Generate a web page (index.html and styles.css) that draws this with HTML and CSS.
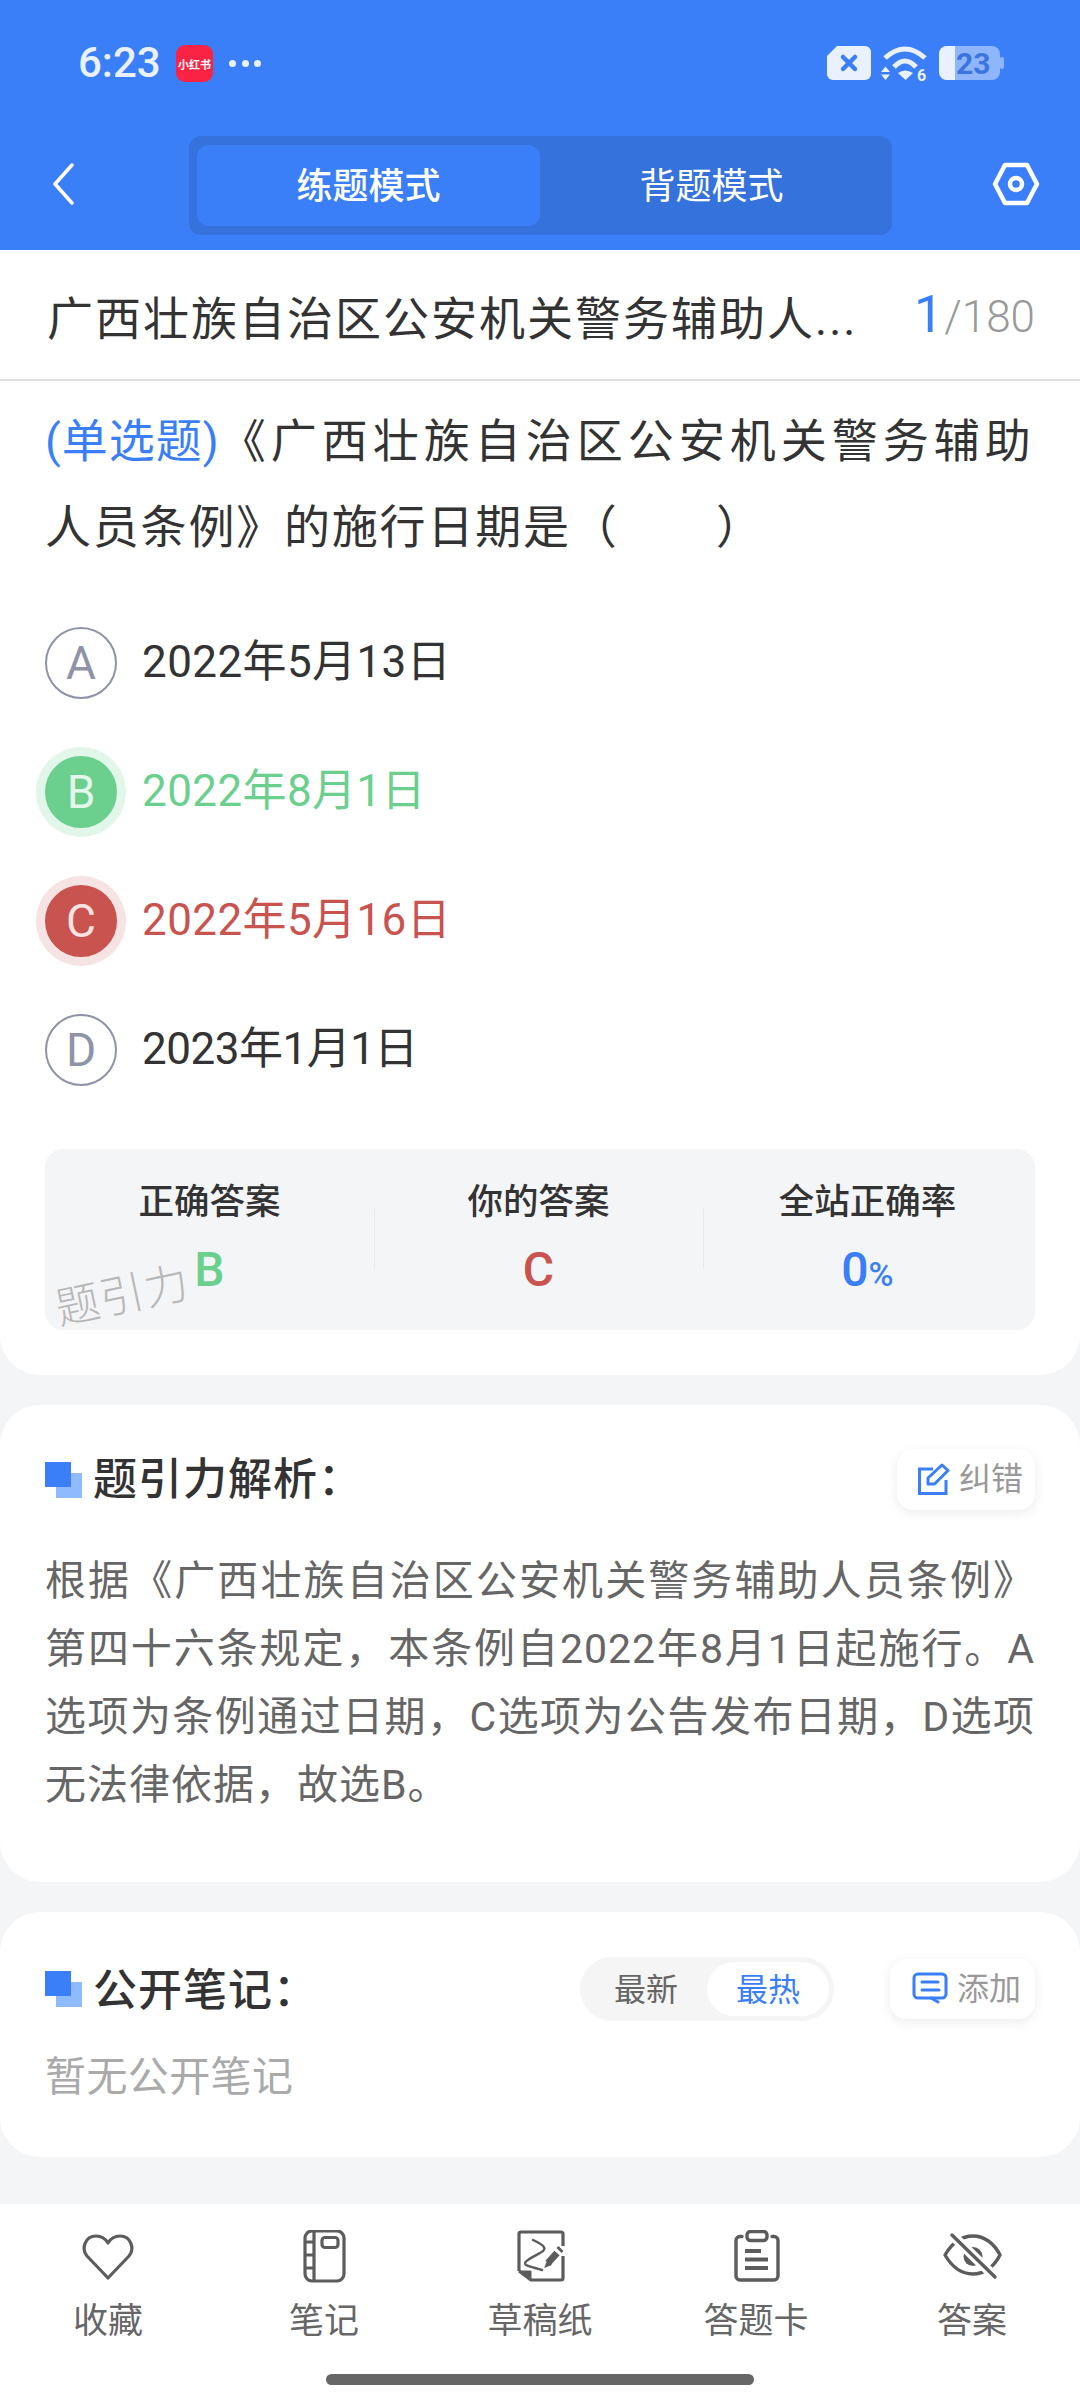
FILE: index.html
```html
<!DOCTYPE html>
<html lang="zh-CN">
<head>
  <meta charset="UTF-8" />
  <meta name="viewport" content="width=device-width, initial-scale=1.0" />
  <title>题引力</title>
  <link rel="stylesheet" href="styles.css">
</head>
<body>
  <div class="header">
    <div class="status">
      <span class="time">6:23</span>
      <span class="app-badge">小红书</span>
      <span class="dots"><i></i><i></i><i></i></span>
      <span class="status-right">
        <svg width="44" height="34" viewBox="0 0 44 34"><path d="M10 0H38a6 6 0 0 1 6 6V28a6 6 0 0 1-6 6H6a6 6 0 0 1-6-6V10z" fill="#e9f0fe"/><path d="M16 11l12 12M28 11L16 23" stroke="#3b7ff8" stroke-width="4.5" stroke-linecap="round"/></svg>
        <svg class="wifi" width="48" height="36" viewBox="0 0 48 36" fill="#e9f0fe"><path d="M4 12Q24 -6 44 12M13 21Q24 9 35 21" fill="none" stroke="#e9f0fe" stroke-width="5"/><path d="M17 27Q24 22 32 27L24.500 34z"/><path d="M4.500 20.500l4.500 5.500H0zM4.500 34l4.500-5.500H0z"/><text x="36" y="35" class="wifi-six">6</text></svg>
        <svg class="battery" width="65" height="34" viewBox="0 0 65 34"><rect width="61" height="34" rx="8" fill="#8fb5fb"/><rect x="61" y="11" width="4" height="12" rx="2" fill="#8fb5fb"/><path d="M8 0H16V34H8a8 8 0 0 1-8-8V8a8 8 0 0 1 8-8z" fill="#e9f0fe"/><text x="17" y="28" class="battery-num">23</text></svg>
      </span>
    </div>
    <div class="topbar">
      <svg class="back" width="22" height="42" viewBox="0 0 22 42" fill="none"><path d="M20 2L3 21l17 19" stroke="#fff" stroke-width="3.5" stroke-linecap="round" stroke-linejoin="round"/></svg>
      <div class="mode-tabs">
        <div class="mode-tab active">练题模式</div>
        <div class="mode-tab">背题模式</div>
      </div>
      <svg class="settings" width="48" height="44" viewBox="0 0 48 44" fill="none" stroke="#fff" stroke-width="4.5"><path d="M13 3H35L45 22 35 41H13L3 22z" stroke-linejoin="round"/><circle cx="24" cy="22" r="6"/></svg>
    </div>
  </div>

  <div class="main">
    <div class="card first">
      <div class="title-row">
        <div class="title">广西壮族自治区公安机关警务辅助人...</div>
        <div class="count"><b>1</b>/180</div>
      </div>
      <div class="question"><span class="q-type">(单选题)</span><span class="q-rest">《广西壮族自治区公安机关警务辅助</span><br>人员条例》的施行日期是（&emsp;&emsp;）</div>
      <div class="options">
        <div class="option"><span class="letter">A</span><span class="opt-text">2022年5月13日</span></div>
        <div class="option right"><span class="letter">B</span><span class="opt-text">2022年8月1日</span></div>
        <div class="option wrong"><span class="letter">C</span><span class="opt-text">2022年5月16日</span></div>
        <div class="option"><span class="letter">D</span><span class="opt-text tight">2023年1月1日</span></div>
      </div>
      <div class="stats">
        <div class="stat"><div class="stat-label">正确答案</div><div class="stat-value green">B</div></div>
        <div class="stat"><div class="stat-label">你的答案</div><div class="stat-value red">C</div></div>
        <div class="stat"><div class="stat-label">全站正确率</div><div class="stat-value blue">0<small>%</small></div></div>
        <div class="watermark">题引力</div>
      </div>
    </div>

    <div class="card analysis">
      <div class="card-head">
        <span class="squares"></span>
        <h3>题引力解析：</h3>
        <span class="chip">
          <svg width="32" height="32" viewBox="0 0 32 32" fill="none" stroke="#3b7ff8" stroke-width="3"><path d="M15 6H1.500V30.500H28V17"/><path d="M10 21V15L24 2l6 5.500L16.500 21z" stroke-linejoin="round"/></svg>
          纠错
        </span>
      </div>
      <p class="analysis-text">根据《广西壮族自治区公安机关警务辅助人员条例》第四十六条规定，本条例自2022年8月1日起施行。A选项为条例通过日期，C选项为公告发布日期，D选项无法律依据，故选B。</p>
    </div>

    <div class="card notes">
      <div class="card-head">
        <span class="squares"></span>
        <h3>公开笔记：</h3>
        <div class="seg">
          <span class="seg-item">最新</span>
          <span class="seg-item active">最热</span>
        </div>
        <span class="chip add">
          <svg width="36" height="32" viewBox="0 0 36 32" fill="none" stroke="#3b7ff8" stroke-width="3"><path d="M6 2H30a4 4 0 0 1 4 4V22a4 4 0 0 1-4 4H26L24 26H6a4 4 0 0 1-4-4V6a4 4 0 0 1 4-4z"/><path d="M19 26l7 4" stroke-linecap="round"/><path d="M10 10H26M10 18H27" stroke-linecap="round"/></svg>
          添加
        </span>
      </div>
      <div class="empty">暂无公开笔记</div>
    </div>
  </div>

  <div class="tabbar">
    <div class="tabs">
      <div class="tab">
        <svg width="54" height="54" viewBox="0 0 54 54" fill="none" stroke="#5c5c5c" stroke-width="3.200"><path d="M27 48L6 26C0 19 4 6 15 6c5 0 9 2 12 7 3-5 7-7 12-7 11 0 15 13 9 20z" stroke-linejoin="round"/></svg>
        <span>收藏</span>
      </div>
      <div class="tab">
        <svg width="54" height="54" viewBox="0 0 54 54" fill="none" stroke="#5c5c5c" stroke-width="3.200"><rect x="8" y="1" width="39" height="50" rx="7"/><path d="M17 1V51M8 12H17M8 25H17M8 38H17"/><rect x="25" y="7.500" width="16" height="10" rx="3"/></svg>
        <span>笔记</span>
      </div>
      <div class="tab">
        <svg width="54" height="54" viewBox="0 0 54 54" fill="none" stroke="#5c5c5c" stroke-width="3.200"><path d="M6 41V4a2 2 0 0 1 2-2H48a2 2 0 0 1 2 2V16M50 26V48a2 2 0 0 1-2 2H18L6 41" stroke-linejoin="round"/><path d="M7 41H18V49.500z" fill="#5c5c5c" stroke-width="1"/><path d="M20 10C28 14 37 18 27 23 18 28 9 32 13 35 17 37 23 38 29 40" stroke-width="2.400" stroke-linecap="round"/><path d="M35 33L44 23" stroke-width="7"/><path d="M31 38l3-7 5 4z" fill="#5c5c5c" stroke="none"/><path d="M46 20.500l2-2" stroke-width="7"/></svg>
        <span>草稿纸</span>
      </div>
      <div class="tab">
        <svg width="54" height="54" viewBox="0 0 54 54" fill="none" stroke="#5c5c5c" stroke-width="3.400"><path d="M13 6.500H11a4 4 0 0 0-4 4V46a4 4 0 0 0 4 4H45a4 4 0 0 0 4-4V10.500a4 4 0 0 0-4-4H43" stroke-linecap="round"/><rect x="18" y="1.500" width="20" height="9" rx="3.500"/><path d="M16 21H32M16 29.500H39M16 38H39" stroke-width="3.800"/></svg>
        <span>答题卡</span>
      </div>
      <div class="tab">
        <svg width="60" height="54" viewBox="0 0 60 54" fill="none" stroke="#5c5c5c" stroke-width="3.400"><path d="M3 25C10 13 20 6 31 6 42 6 52 13 58 25 52 37 42 44 31 44 20 44 10 37 3 25z" stroke-linejoin="round"/><circle cx="31" cy="26.500" r="9.500" fill="#5c5c5c" stroke="none"/><path d="M8 3L55 49" stroke="#fff" stroke-width="10"/><path d="M10 5L53 47" stroke-linecap="round"/></svg>
        <span>答案</span>
      </div>
    </div>
    <div class="home-bar"></div>
  </div>
</body>
</html>
```

FILE: styles.css
```css
* {
  box-sizing: border-box;
}
body {
  margin: 0;
  width: 1080px;
  height: 2400px;
  overflow: hidden;
  display: flex;
  flex-direction: column;
  font-family: Roboto, "Noto Sans CJK SC", sans-serif;
  background-color: #f4f5f7;
  color: #333;
}

/* header */
.header {
  background-color: #3b7ff8;
  height: 250px;
  flex-shrink: 0;
}
.status {
  height: 136px;
  padding: 45px 76px 0 78px;
  display: flex;
  align-items: flex-start;
  color: #e9f0fe;
}
.time {
  font-size: 42px;
  line-height: 36px;
  font-weight: 500;
  width: 98px;
}
.app-badge {
  width: 37px;
  height: 37px;
  border-radius: 9px;
  background-color: #fb2343;
  color: #fff;
  font-size: 11px;
  font-weight: 700;
  white-space: nowrap;
  display: flex;
  align-items: center;
  justify-content: center;
}
.dots {
  display: flex;
  gap: 5.5px;
  margin: 15px 0 0 16px;
}
.dots i {
  width: 7px;
  height: 7px;
  border-radius: 50%;
  background-color: #e9f0fe;
}
.status-right {
  margin-left: auto;
  margin-top: 1px;
  display: flex;
  gap: 10px;
}
.wifi {
  overflow: visible;
}
.wifi-six {
  font: 700 16px Roboto, sans-serif;
  fill: #e9f0fe;
}
.battery-num {
  font: 700 30px Roboto, sans-serif;
  fill: #3a74dc;
}
.topbar {
  height: 99px;
  padding: 0 40px 0 52px;
  display: flex;
  align-items: center;
}
.back {
  margin-bottom: 3px;
}
.mode-tabs {
  width: 703px;
  height: 99px;
  margin-left: 115px;
  padding: 9px 8px;
  background-color: #3672dc;
  border-radius: 12px;
  display: flex;
}
.mode-tab {
  width: 343px;
  padding-bottom: 5px;
  border-radius: 12px;
  color: #fff;
  font-size: 36px;
  display: flex;
  align-items: center;
  justify-content: center;
}
.mode-tab.active {
  background-color: #3b7ff8;
  font-weight: 500;
}
.settings {
  margin-left: auto;
  margin-bottom: 3px;
}

/* cards */
.main {
  flex: 1;
  display: flex;
  flex-direction: column;
  gap: 30px;
}
.card {
  background-color: #fff;
  border-radius: 40px;
  padding: 0 45px;
}
.card.first {
  border-radius: 0 0 40px 40px;
  padding-bottom: 45px;
}
.title-row {
  height: 131px;
  margin: 0 -45px;
  padding: 0 45px 0 47px;
  border-bottom: 2px solid #dedede;
  display: flex;
  align-items: center;
  justify-content: space-between;
}
.title {
  font-size: 46px;
  letter-spacing: 2px;
  white-space: nowrap;
}
.count {
  color: #999;
  font-size: 44px;
  font-weight: 300;
}
.count b {
  color: #3b7ff8;
  font-size: 52px;
  font-weight: 400;
  margin-right: 1px;
}
.question {
  margin-top: 17px;
  font-size: 46px;
  line-height: 86px;
  letter-spacing: 1.8px;
  white-space: nowrap;
}
.q-type {
  color: #3b7ff8;
  letter-spacing: 1px;
}
.q-rest {
  letter-spacing: 5px;
}
.options {
  margin-top: 28px;
}
.option {
  height: 129px;
  font-size: 44px;
  display: flex;
  align-items: center;
  gap: 25px;
}
.opt-text {
  padding-bottom: 9px;
  letter-spacing: 0.4px;
}
.opt-text.tight {
  letter-spacing: -0.5px;
}
.letter {
  width: 72px;
  height: 72px;
  border-radius: 50%;
  border: 2px solid #8f93a8;
  color: #8f93a8;
  font-size: 46px;
  display: flex;
  align-items: center;
  justify-content: center;
}
.option.right {
  color: #6bcf8e;
}
.option.right .letter {
  background-color: #6bcf8e;
  border-color: #6bcf8e;
  color: #e3f7ea;
  box-shadow: 0 0 0 9px #e2f6e9;
}
.option.wrong {
  color: #c8534f;
}
.option.wrong .letter {
  background-color: #c8534f;
  border-color: #c8534f;
  color: #f6e2e1;
  box-shadow: 0 0 0 9px #f6e3e3;
}
.stats {
  position: relative;
  margin-top: 35px;
  height: 181px;
  background-color: #f4f5f7;
  border-radius: 18px;
  display: flex;
}
.stat {
  width: 329px;
  padding-top: 31px;
  text-align: center;
  position: relative;
}
.stat:last-of-type {
  flex: 1;
}
.stat + .stat::before {
  content: "";
  position: absolute;
  left: 0;
  top: 60px;
  height: 60px;
  width: 1px;
  background-color: #e8e9ec;
}
.stat-label {
  font-size: 35.500px;
  line-height: 44px;
  font-weight: 500;
}
.stat-value {
  margin-top: 19px;
  font-size: 48px;
  line-height: 54px;
  font-weight: 500;
}
.stat-value small {
  font-size: 34px;
}
.green {
  color: #6bcf8e;
}
.red {
  color: #c8534f;
}
.blue {
  color: #3b7ff8;
}
.watermark {
  position: absolute;
  left: 10px;
  top: 122px;
  font-size: 44px;
  line-height: 50px;
  font-weight: 300;
  color: #b8b8b8;
  letter-spacing: 1px;
  transform: rotate(-12deg);
}

.card-head {
  display: flex;
  align-items: center;
}
.squares {
  position: relative;
  width: 37px;
  height: 36px;
  background: linear-gradient(#8fbafc, #8fbafc) 11px 11px / 26px 25px no-repeat;
  flex-shrink: 0;
}
.squares::before {
  content: "";
  position: absolute;
  left: 0;
  top: 0;
  width: 26px;
  height: 25px;
  background-color: #3b7ff8;
}
.card-head h3 {
  margin: 0 0 0 11px;
  font-size: 44px;
  line-height: 60px;
  font-weight: 500;
  letter-spacing: 1px;
}
.chip {
  margin-left: auto;
  height: 61px;
  padding: 0 12px 8px 21px;
  border-radius: 16px;
  background-color: #fff;
  box-shadow: 0 3px 12px rgba(0, 0, 0, 0.08);
  color: #999;
  font-size: 32px;
  display: flex;
  align-items: center;
  gap: 9px;
}
.chip svg {
  margin-top: 6px;
}
.analysis {
  height: 477px;
  padding-top: 44px;
}
.analysis-text {
  margin: 37px 0 0;
  font-size: 41px;
  line-height: 68px;
  letter-spacing: 1px;
  color: #666;
  text-align: justify;
}
.notes {
  height: 245px;
  padding-top: 45px;
}
.notes h3 {
  padding-top: 4px;
}
.seg {
  margin-left: auto;
  width: 254px;
  height: 64px;
  padding: 5px;
  border-radius: 32px;
  background-color: #f5f5f5;
  display: flex;
  font-size: 32px;
  color: #666;
}
.seg-item {
  flex: 1;
  padding-bottom: 5px;
  border-radius: 27px;
  display: flex;
  align-items: center;
  justify-content: center;
}
.seg-item.active {
  background-color: #fff;
  color: #3b7ff8;
}
.chip.add {
  margin-left: 56px;
  height: 60px;
  padding: 0 14px 6px 22px;
}
.chip.add svg {
  margin-top: 4px;
}
.empty {
  margin-top: 26px;
  font-size: 41px;
  line-height: 60px;
  letter-spacing: 0.4px;
  color: #aaa;
}

/* bottom bar */
.tabbar {
  height: 196px;
  flex-shrink: 0;
  background-color: #fff;
  padding-top: 26px;
  display: flex;
  flex-direction: column;
}
.tabs {
  display: flex;
}
.tab {
  width: 216px;
  display: flex;
  flex-direction: column;
  align-items: center;
  color: #666;
  font-size: 35px;
  line-height: 50px;
}
.tab span {
  margin-top: 13px;
}
.home-bar {
  width: 428px;
  height: 11px;
  margin: 27px auto 0;
  border-radius: 6px;
  background-color: #666;
}
```
